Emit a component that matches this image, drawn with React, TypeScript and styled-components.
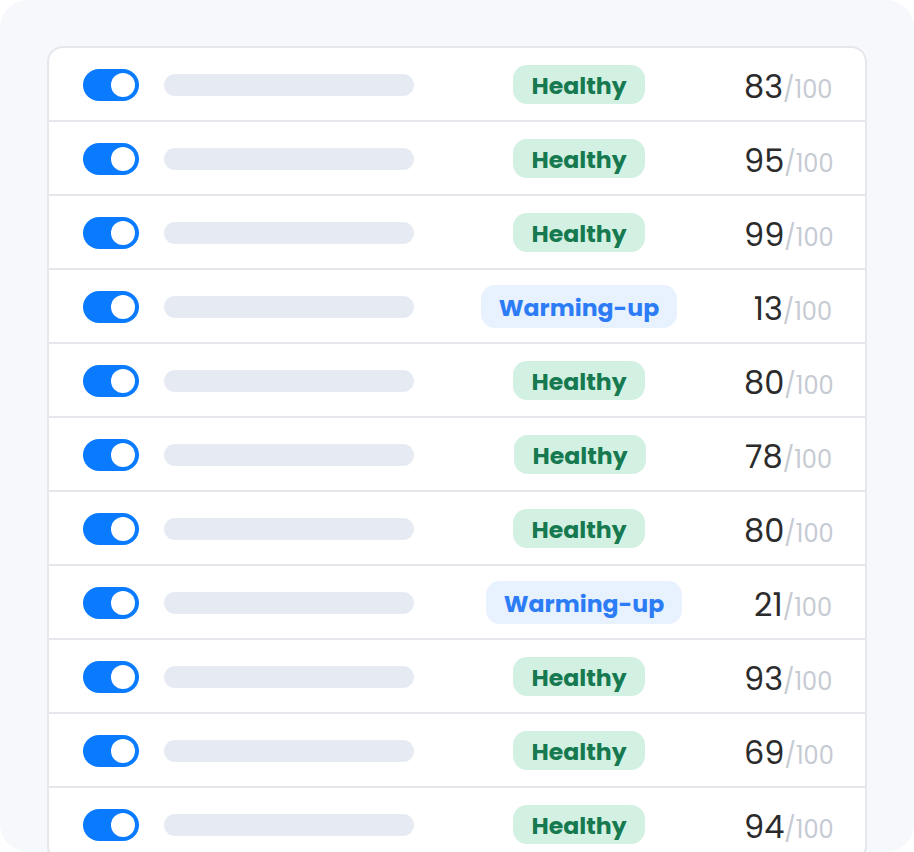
import React from "react";
import styled, { createGlobalStyle } from "styled-components";

const Global = createGlobalStyle`
  html, body { margin: 0; padding: 0; background: #ffffff; }
  * { box-sizing: border-box; }
`;

const Panel = styled.div`
  width: 914px;
  height: 852px;
  background: #f7f8fc;
  border-radius: 28px;
  overflow: hidden;
  padding: 46px 47px 0 47px;
`;

const Card = styled.div`
  background: #ffffff;
  border: 2px solid #e5e7ed;
  border-radius: 16px;
  overflow: hidden;
`;

const Row = styled.div`
  display: grid;
  grid-template-columns: 56px 275px 330px 1fr;
  align-items: center;
  height: 74px;
  padding: 1px 33px 0 34px;
  border-top: 2px solid #e5e7ed;
  &:first-child {
    border-top: none;
    height: 72px;
  }
`;

const Toggle = styled.div`
  width: 56px;
  height: 32px;
  border-radius: 16px;
  background: #0a7bff;
  display: flex;
  align-items: center;
  justify-content: flex-end;
  padding-right: 4px;
`;

const Knob = styled.div`
  width: 24px;
  height: 24px;
  border-radius: 50%;
  background: #ffffff;
`;

const Bar = styled.div`
  justify-self: end;
  width: 250px;
  height: 22px;
  border-radius: 11px;
  background: #e6eaf2;
`;

const BadgeCell = styled.div`
  display: flex;
  justify-content: center;
`;

const Badge = styled.span<{ $kind: "healthy" | "warming"; $shift: number }>`
  display: inline-flex;
  align-items: center;
  justify-content: center;
  height: ${(p) => (p.$kind === "warming" ? 43 : 39)}px;
  padding: 2px 18px 0;
  border-radius: 14px;
  font-family: "Poppins", "Inter", "Noto Sans", sans-serif;
  font-weight: 700;
  font-size: 23.6px;
  line-height: 1;
  transform: translateX(${(p) => p.$shift}px);
  background: ${(p) => (p.$kind === "warming" ? "#e8f1fe" : "#d3f1e3")};
  color: ${(p) => (p.$kind === "warming" ? "#2c7cf6" : "#16794f")};
`;

const Score = styled.div`
  justify-self: end;
  display: flex;
  align-items: baseline;
  font-family: "Poppins", "Roboto", "Inter", sans-serif;
  padding-top: 4px;
`;

const Value = styled.span`
  font-size: 32px;
  font-weight: 400;
  color: #2b2b2b;
`;

const Total = styled.span`
  font-size: 24px;
  font-weight: 400;
  color: #c6cad2;
`;

type Item = { score: number; kind: "healthy" | "warming"; shift: number };

const items: Item[] = [
  { score: 83, kind: "healthy", shift: 0 },
  { score: 95, kind: "healthy", shift: 0 },
  { score: 99, kind: "healthy", shift: 0 },
  { score: 13, kind: "warming", shift: 0 },
  { score: 80, kind: "healthy", shift: 0 },
  { score: 78, kind: "healthy", shift: 1 },
  { score: 80, kind: "healthy", shift: 0 },
  { score: 21, kind: "warming", shift: 5 },
  { score: 93, kind: "healthy", shift: 0 },
  { score: 69, kind: "healthy", shift: 0 },
  { score: 94, kind: "healthy", shift: 0 },
];

export default function App() {
  return (
    <>
      <Global />
      <Panel>
        <Card>
          {items.map((it, i) => (
            <Row key={i}>
              <Toggle>
                <Knob />
              </Toggle>
              <Bar />
              <BadgeCell>
                <Badge $kind={it.kind} $shift={it.shift}>
                  {it.kind === "warming" ? "Warming-up" : "Healthy"}
                </Badge>
              </BadgeCell>
              <Score>
                <Value>{it.score}</Value>
                <Total>/100</Total>
              </Score>
            </Row>
          ))}
        </Card>
      </Panel>
    </>
  );
}
